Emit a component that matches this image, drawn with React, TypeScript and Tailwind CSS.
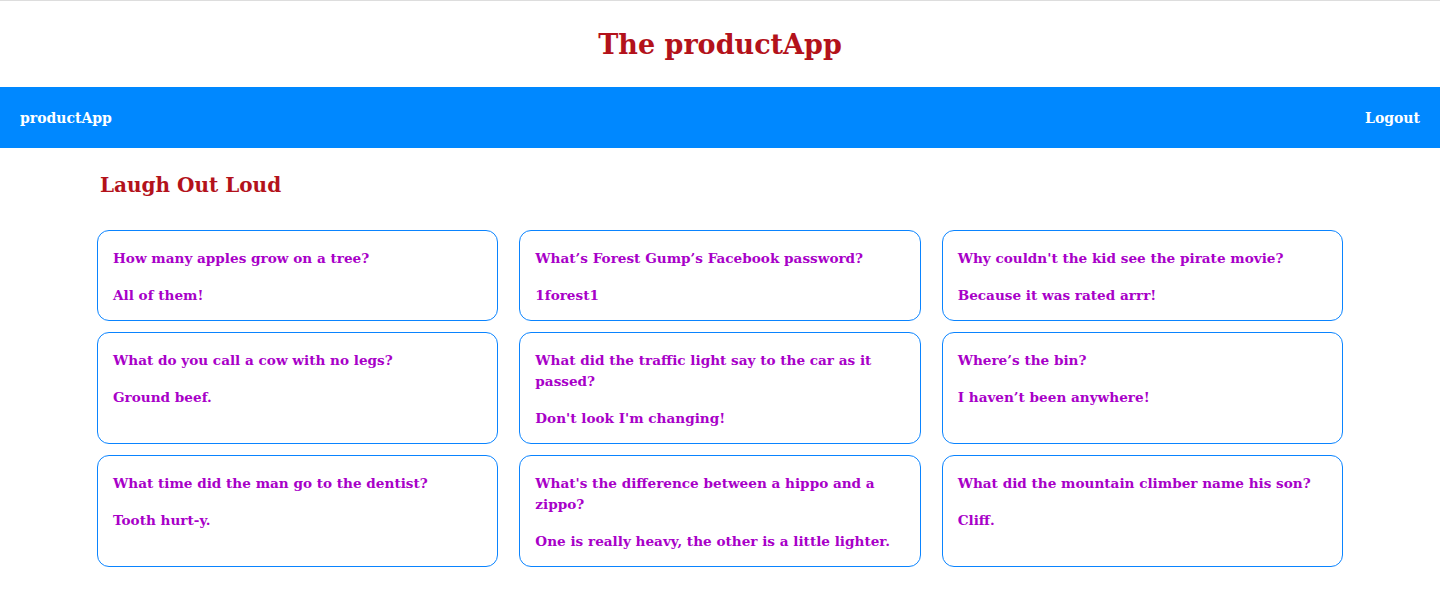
import React from 'react';

const jokes = [
  { q: 'How many apples grow on a tree?', a: 'All of them!' },
  { q: 'What’s Forest Gump’s Facebook password?', a: '1forest1' },
  { q: "Why couldn't the kid see the pirate movie?", a: 'Because it was rated arrr!' },
  { q: 'What do you call a cow with no legs?', a: 'Ground beef.' },
  { q: 'What did the traffic light say to the car as it passed?', a: "Don't look I'm changing!" },
  { q: 'Where’s the bin?', a: 'I haven’t been anywhere!' },
  { q: 'What time did the man go to the dentist?', a: 'Tooth hurt-y.' },
  { q: "What's the difference between a hippo and a zippo?", a: 'One is really heavy, the other is a little lighter.' },
  { q: 'What did the mountain climber name his son?', a: 'Cliff.' },
];

export default function App() {
  return (
    <div className="min-h-screen bg-white font-['DejaVu_Serif',serif] border-t border-[#dddddd]">
      {/* Page title */}
      <header className="h-[86px] flex items-center justify-center">
        <h1 className="text-[27px] font-bold text-[#b3121b] pt-[2px]">The productApp</h1>
      </header>

      {/* Navbar */}
      <nav className="h-[61px] bg-[#0088ff] flex items-center justify-between px-5 text-white font-bold text-[14px]">
        <span className="pt-[2px]">productApp</span>
        <span className="pt-[2px]">Logout</span>
      </nav>

      <main className="w-[1246px] mx-auto">
        <h2 className="pt-[22px] pl-[3px] text-[20px] leading-[30px] font-bold text-[#b3121b]">Laugh Out Loud</h2>

        <div className="mt-[30px] grid grid-cols-3 gap-x-[21px] gap-y-[11px]">
          {jokes.map((joke) => (
            <div
              key={joke.q}
              className="border border-[#0a84ff] rounded-xl px-[15px] pt-[17px] pb-[14px] text-[13.6px] leading-[21px] font-bold text-[#a800c8]"
            >
              <p>{joke.q}</p>
              <p className="mt-[16px]">{joke.a}</p>
            </div>
          ))}
        </div>
      </main>
    </div>
  );
}
